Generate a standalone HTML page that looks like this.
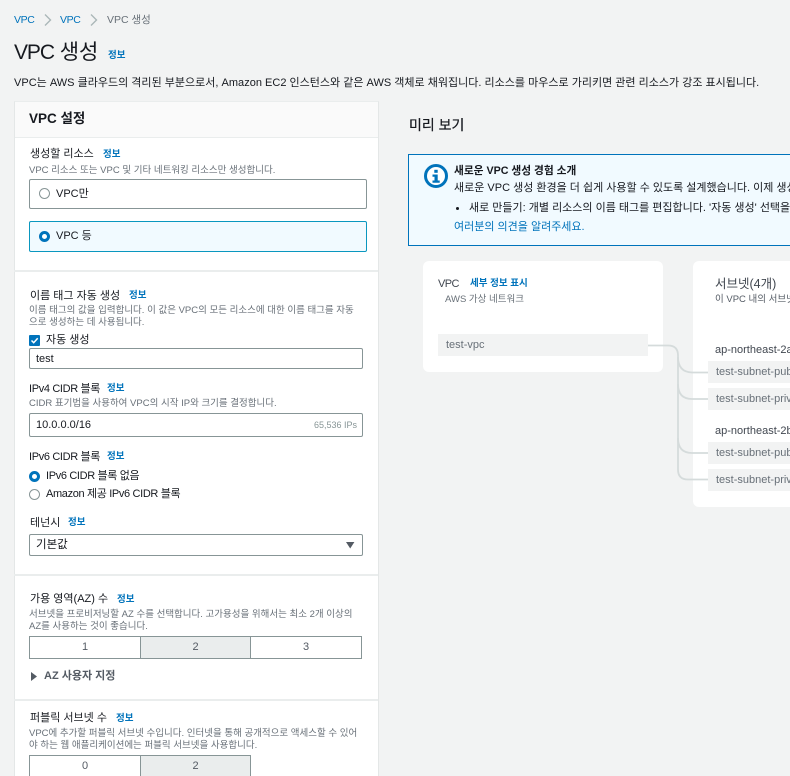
<!DOCTYPE html>
<html lang="ko"><head><meta charset="utf-8">
<style>
html,body{margin:0;padding:0;width:790px;height:776px;overflow:hidden}
body{background:#f2f3f3;font-family:"Liberation Sans","Noto Sans CJK KR",sans-serif;color:#16191f;font-size:11px}
#w{position:relative;width:790px;height:776px;overflow:hidden;background:#f2f3f3}
.t{position:absolute;white-space:nowrap;line-height:16px;height:16px;margin-top:1px}
.b{position:absolute;box-sizing:border-box}
.l{font-size:11px;color:#16191f}
.s{font-size:9.5px;color:#687078}
.i{font-size:9.5px;color:#0073bb;font-weight:700}
.in{border:1px solid #879596;background:#fff;border-radius:2px}
.hr{position:absolute;left:14px;width:364px;height:2px;background:#eaeded}
.seg{position:absolute;box-sizing:border-box;border:1px solid #879596;background:#fff;text-align:center;font-size:11px;color:#545b64;line-height:20px}
.on{background:#eaeded}
.row{position:absolute;left:708px;width:90px;height:22px;background:#f2f3f3;line-height:22px;font-size:11px;color:#687078;padding-left:8px;box-sizing:border-box;white-space:nowrap;overflow:hidden}
.n{letter-spacing:-.35px}
</style></head><body><div id="w">

<div class="t n" style="left:14px;top:11px;color:#0073bb;font-size:10.5px">VPC</div>
<svg class="b" style="left:44px;top:13px" width="8" height="14"><path d="M1 1.5l5.5 5.5L1 12.5" fill="none" stroke="#aab7b8" stroke-width="1.4"/></svg>
<div class="t n" style="left:60px;top:11px;color:#0073bb;font-size:10.5px">VPC</div>
<svg class="b" style="left:90px;top:13px" width="8" height="14"><path d="M1 1.5l5.5 5.5L1 12.5" fill="none" stroke="#aab7b8" stroke-width="1.4"/></svg>
<div class="t" style="left:107px;top:11px;color:#687078;font-size:10.5px">VPC 생성</div>

<div class="t" style="left:14px;top:41px;font-size:21px;line-height:22px;height:22px;color:#16191f"><span style="letter-spacing:-1.1px">VPC</span> 생성</div>
<div class="t i" style="left:108px;top:47px">정보</div>
<div class="t" style="left:14px;top:74px;font-size:11px;letter-spacing:.01px">VPC는 AWS 클라우드의 격리된 부분으로서, Amazon EC2 인스턴스와 같은 AWS 객체로 채워집니다. 리소스를 마우스로 가리키면 관련 리소스가 강조 표시됩니다.</div>

<!-- Left panel -->
<div class="b" style="left:14px;top:101px;width:365px;height:690px;background:#fff;border:1px solid #e4e7e7;border-top-color:#eaeded"></div>
<div class="b" style="left:15px;top:102px;width:363px;height:36px;background:#fafafa;border-bottom:1px solid #eaeded"></div>
<div class="t" style="left:29px;top:110px;font-size:13.5px;font-weight:700">VPC 설정</div>

<div class="t l" style="left:30px;top:145px">생성할 리소스</div>
<div class="t i" style="left:103px;top:146px">정보</div>
<div class="t s" style="left:29px;top:162px">VPC 리소스 또는 VPC 및 기타 네트워킹 리소스만 생성합니다.</div>
<div class="b in" style="left:29px;top:179px;width:338px;height:30px"></div>
<div class="b" style="left:39px;top:188px;width:11px;height:11px;border:1px solid #879596;border-radius:50%;background:#fff"></div>
<div class="t l" style="left:56px;top:185px">VPC만</div>
<div class="b" style="left:29px;top:221px;width:338px;height:31px;border:1px solid #0a97bf;background:#f1faff;border-radius:2px"></div>
<div class="b" style="left:39px;top:231px;width:11px;height:11px;border:3.5px solid #0073bb;border-radius:50%;background:#fff"></div>
<div class="t l" style="left:56px;top:227px">VPC 등</div>
<div class="hr" style="top:270px"></div>

<div class="t l" style="left:30px;top:287px">이름 태그 자동 생성</div>
<div class="t i" style="left:129px;top:287px">정보</div>
<div class="t s" style="left:29px;top:302px">이름 태그의 값을 입력합니다. 이 값은 VPC의 모든 리소스에 대한 이름 태그를 자동</div>
<div class="t s" style="left:29px;top:314px">으로 생성하는 데 사용됩니다.</div>
<div class="b" style="left:29px;top:335px;width:11px;height:11px;background:#0073bb;border-radius:1px"></div>
<svg class="b" style="left:29px;top:335px" width="11" height="11"><path d="M2.5 5.5l2.2 2.2 4-4.5" fill="none" stroke="#fff" stroke-width="1.5"/></svg>
<div class="t l" style="left:46px;top:331px">자동 생성</div>
<div class="b in" style="left:29px;top:348px;width:334px;height:21px"></div>
<div class="t l" style="left:36px;top:350px">test</div>

<div class="t l n" style="left:29px;top:380px">IPv4 CIDR 블록</div>
<div class="t i" style="left:107px;top:380px">정보</div>
<div class="t s" style="left:29px;top:395px">CIDR 표기법을 사용하여 VPC의 시작 IP와 크기를 결정합니다.</div>
<div class="b in" style="left:29px;top:413px;width:334px;height:24px"></div>
<div class="t l" style="left:36px;top:416px">10.0.0.0/16</div>
<div class="t" style="left:314px;top:416px;font-size:9px;color:#879596">65,536 IPs</div>

<div class="t l n" style="left:29px;top:448px">IPv6 CIDR 블록</div>
<div class="t i" style="left:107px;top:448px">정보</div>
<div class="b" style="left:29px;top:471px;width:11px;height:11px;border:3.5px solid #0073bb;border-radius:50%;background:#fff"></div>
<div class="t l n" style="left:46px;top:467px">IPv6 CIDR 블록 없음</div>
<div class="b" style="left:29px;top:489px;width:11px;height:11px;border:1px solid #879596;border-radius:50%;background:#fff"></div>
<div class="t l n" style="left:46px;top:485px">Amazon 제공 IPv6 CIDR 블록</div>

<div class="t l" style="left:30px;top:514px">테넌시</div>
<div class="t i" style="left:68px;top:514px">정보</div>
<div class="b in" style="left:29px;top:534px;width:334px;height:22px"></div>
<div class="t" style="left:36px;top:536px;font-size:11.5px">기본값</div>
<svg class="b" style="left:346px;top:542px" width="9" height="7"><path d="M0 0h8.4L4.2 6.5z" fill="#545b64"/></svg>
<div class="hr" style="top:574px"></div>

<div class="t l" style="left:30px;top:590px">가용 영역(AZ) 수</div>
<div class="t i" style="left:117px;top:591px">정보</div>
<div class="t s" style="left:29px;top:606px">서브넷을 프로비저닝할 AZ 수를 선택합니다. 고가용성을 위해서는 최소 2개 이상의</div>
<div class="t s" style="left:29px;top:618px">AZ를 사용하는 것이 좋습니다.</div>
<div class="seg" style="left:29px;top:636px;width:112px;height:23px">1</div>
<div class="seg on" style="left:140px;top:636px;width:111px;height:23px">2</div>
<div class="seg" style="left:250px;top:636px;width:112px;height:23px">3</div>
<svg class="b" style="left:30px;top:671px" width="8" height="11"><path d="M1 1l6 4.5-6 4.5z" fill="#545b64"/></svg>
<div class="t" style="left:44px;top:667px;font-size:11px;font-weight:700;color:#545b64">AZ 사용자 지정</div>
<div class="hr" style="top:699px"></div>

<div class="t l" style="left:30px;top:709px">퍼블릭 서브넷 수</div>
<div class="t i" style="left:116px;top:710px">정보</div>
<div class="t s" style="left:29px;top:725px">VPC에 추가할 퍼블릭 서브넷 수입니다. 인터넷을 통해 공개적으로 액세스할 수 있어</div>
<div class="t s" style="left:29px;top:737px">야 하는 웹 애플리케이션에는 퍼블릭 서브넷을 사용합니다.</div>
<div class="seg" style="left:29px;top:755px;width:112px;height:23px">0</div>
<div class="seg on" style="left:140px;top:755px;width:111px;height:23px">2</div>

<!-- Right -->
<div class="t" style="left:409px;top:116px;font-size:14px;color:#16191f;-webkit-text-stroke:.2px #16191f">미리 보기</div>

<div class="b" style="left:408px;top:154px;width:400px;height:92px;background:#f1faff;border:1px solid #0073bb"></div>
<svg class="b" style="left:424px;top:164px" width="24" height="24"><circle cx="12" cy="12" r="10.5" fill="#fff" stroke="#0073bb" stroke-width="3"/><rect x="10.3" y="5.8" width="3.4" height="3" fill="#0073bb"/><path d="M8.5 10.5h5.2v6h2v2.2H8.5v-2.2h2v-3.8h-2z" fill="#0073bb"/></svg>
<div class="t" style="left:454px;top:162px;font-size:10.7px;font-weight:700">새로운 VPC 생성 경험 소개</div>
<div class="t" style="left:454px;top:179px;font-size:11px;color:#16191f">새로운 VPC 생성 환경을 더 쉽게 사용할 수 있도록 설계했습니다. 이제 생성</div>
<div class="b" style="left:456px;top:207px;width:3px;height:3px;background:#16191f;border-radius:50%"></div>
<div class="t" style="left:469px;top:199px;font-size:11px;color:#16191f">새로 만들기: 개별 리소스의 이름 태그를 편집합니다. '자동 생성' 선택을</div>
<div class="t" style="left:454px;top:218px;font-size:11px;color:#0073bb">여러분의 의견을 알려주세요.</div>

<div class="b" style="left:423px;top:261px;width:240px;height:111px;background:#fff;border-radius:6px"></div>
<div class="t l n" style="left:438px;top:275px;color:#414750;letter-spacing:-.6px">VPC</div>
<div class="t i" style="left:470px;top:275px">세부 정보 표시</div>
<div class="t s" style="left:445px;top:291px">AWS 가상 네트워크</div>
<div class="row" style="left:438px;top:334px;width:210px">test-vpc</div>

<div class="b" style="left:693px;top:261px;width:110px;height:246px;background:#fff;border-radius:6px"></div>
<div class="t" style="left:715px;top:275px;font-size:12.5px;color:#414750">서브넷(4개)</div>
<div class="t s" style="left:715px;top:291px;color:#545b64">이 VPC 내의 서브넷</div>
<div class="t l" style="left:715px;top:341px;color:#414750">ap-northeast-2a</div>
<div class="row" style="top:361px">test-subnet-public1</div>
<div class="row" style="top:388px">test-subnet-private1</div>
<div class="t l" style="left:715px;top:422px;color:#414750">ap-northeast-2b</div>
<div class="row" style="top:442px">test-subnet-public2</div>
<div class="row" style="top:469px">test-subnet-private2</div>

<svg class="b" style="left:640px;top:330px" width="70" height="160" fill="none" stroke="#d5dbdb" stroke-width="1.8">
<path d="M8 15.5h20q10 0 10 10v114q0 10 10 10h20"/>
<path d="M38 27q0 15 14 15.5h16"/>
<path d="M38 54q0 15 14 15h16"/>
<path d="M38 108q0 15 14 15h16"/>
</svg>
</div></body></html>
